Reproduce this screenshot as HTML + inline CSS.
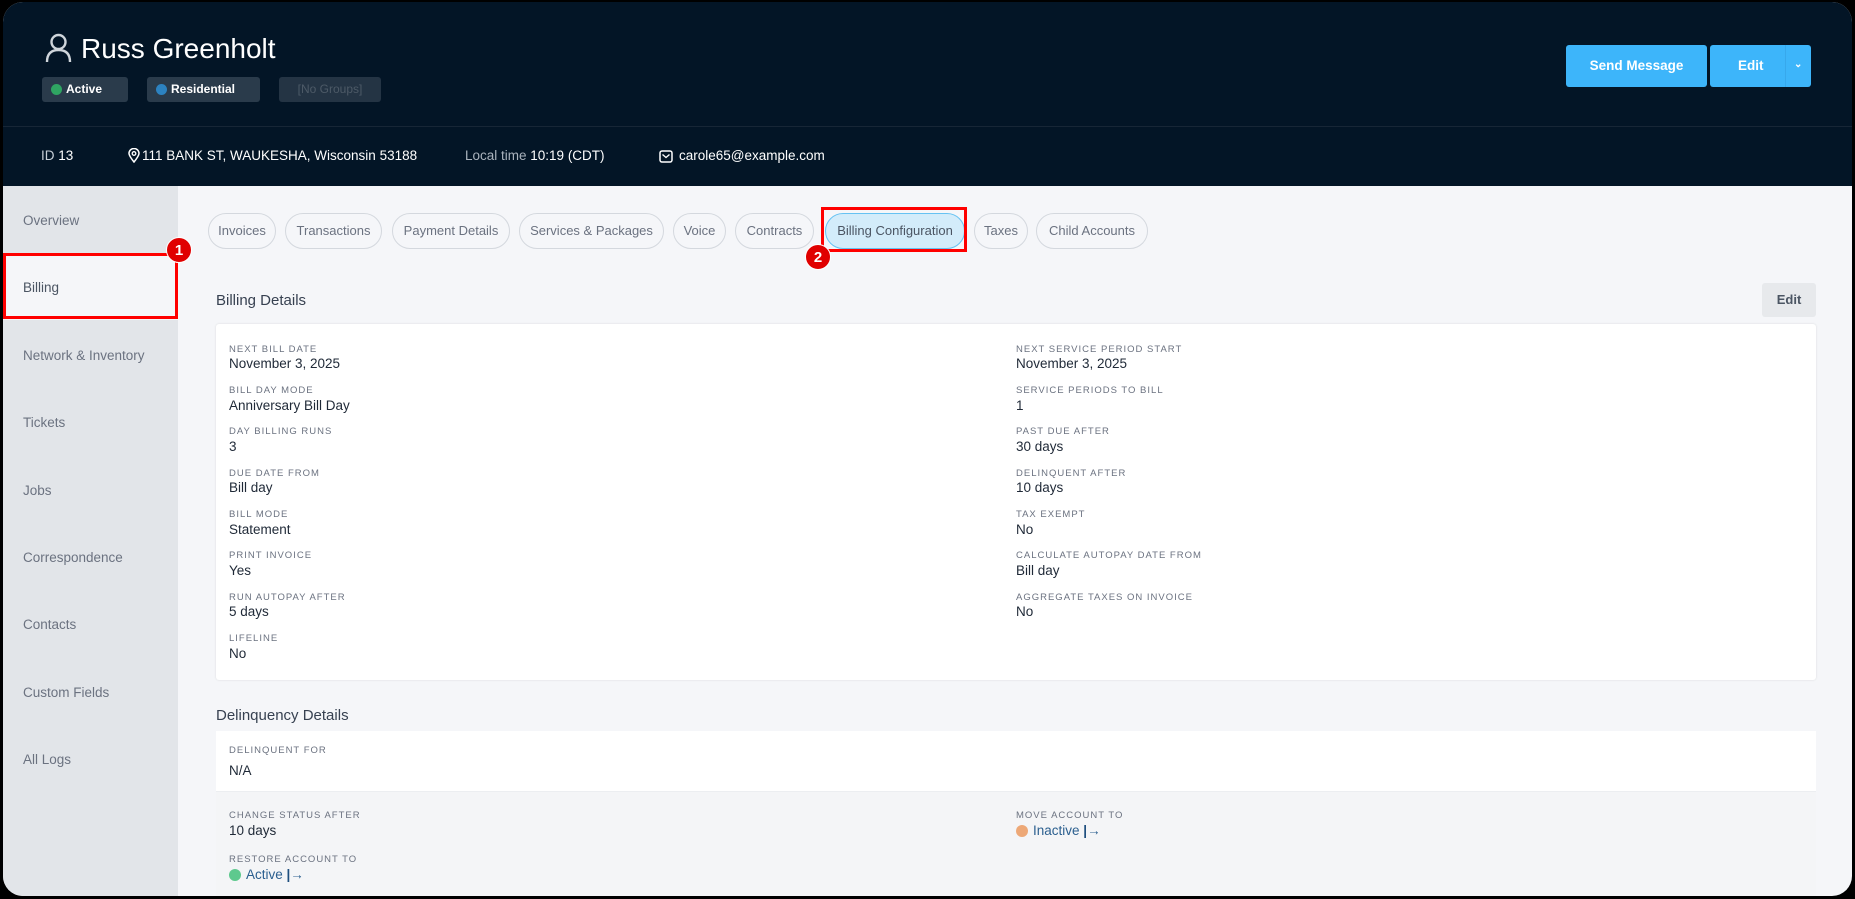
<!DOCTYPE html>
<html><head><meta charset="utf-8"><style>
*{margin:0;padding:0;box-sizing:border-box}
html,body{width:1855px;height:899px;background:#000;overflow:hidden;font-family:"Liberation Sans",sans-serif}
#f{position:absolute;left:3px;top:2px;width:1849px;height:894px;border-radius:20px;overflow:hidden;background:#f5f6f9}
.a{position:absolute;white-space:nowrap}
#hd{position:absolute;left:0;top:0;width:100%;height:184px;background:#031526}
#sep{position:absolute;left:0;top:124px;width:100%;height:1px;background:#172636}
.bd{position:absolute;top:75px;height:25px;border-radius:3px;background:#2a3b4b;color:#fff;font-size:12px;font-weight:bold;line-height:25px;padding-left:24px}
.bd i{position:absolute;left:9px;top:7px;width:11px;height:11px;border-radius:50%}
.info{position:absolute;top:146px;font-size:13.5px;color:#e6ebf0}
#sb{position:absolute;left:0;top:184px;width:175px;height:720px;background:#e2e5e9}
.si{position:absolute;left:20px;font-size:13.5px;color:#6b7280}
.tab{position:absolute;top:211px;height:36px;border:1px solid #d4d8de;border-radius:18px;font-size:13px;color:#6b7280;line-height:34px;text-align:center}
.lb{position:absolute;font-size:9.5px;letter-spacing:1px;color:#6b7280}
.vl{position:absolute;font-size:13.5px;color:#1f2937}
.num{position:absolute;width:26px;height:26px;border-radius:50%;background:#e00000;color:#fff;font-weight:bold;font-size:15px;text-align:center;line-height:26px;border:1px solid #fff}
</style></head><body><div id="f">
<div id="hd">
<svg class="a" style="left:42px;top:31px" width="27" height="30" viewBox="0 0 27 30"><circle cx="13.5" cy="9" r="7" fill="none" stroke="#cfd5db" stroke-width="2.4"/><path d="M2 29 Q2 17 13.5 17 Q25 17 25 29" fill="none" stroke="#cfd5db" stroke-width="2.4"/></svg>
<div class="a" style="left:78px;top:31px;font-size:28px;color:#fff">Russ Greenholt</div>
<div class="bd" style="left:39px;width:86px"><i style="background:#2fa562"></i>Active</div>
<div class="bd" style="left:144px;width:113px"><i style="background:#2c82c0"></i>Residential</div>
<div class="bd" style="left:276px;width:102px;padding-left:0;text-align:center;color:#4d5a67;font-weight:normal;background:#243444">[No Groups]</div>
<div class="a" style="left:1563px;top:43px;width:141px;height:42px;background:#3db5fa;border-radius:3px;color:#fff;font-size:13.5px;font-weight:bold;text-align:center;line-height:42px">Send Message</div>
<div class="a" style="left:1707px;top:43px;width:101px;height:42px;background:#3db5fa;border-radius:3px;color:#fff;font-size:13.5px;font-weight:bold;line-height:42px"><span style="position:absolute;left:28px">Edit</span><span style="position:absolute;left:75px;top:0;width:1px;height:42px;background:#37a8ec"></span><span style="position:absolute;left:84px;top:-1px;font-size:10px">&#8964;</span></div>
<div id="sep"></div>
<div class="info" style="left:38px;color:#c8d0d8">ID <span style="color:#fff">13</span></div>
<svg class="a" style="left:125px;top:146px" width="12" height="15" viewBox="0 0 12 15"><path d="M6 14 C2 9 1 7 1 5.5 A5 5 0 0 1 11 5.5 C11 7 10 9 6 14Z" fill="none" stroke="#fff" stroke-width="1.5"/><circle cx="6" cy="5.5" r="1.8" fill="none" stroke="#fff" stroke-width="1.3"/></svg>
<div class="info" style="left:139px;color:#fff">111 BANK ST, WAUKESHA, Wisconsin 53188</div>
<div class="info" style="left:462px;color:#aab3bd">Local time <span style="color:#fff">10:19 (CDT)</span></div>
<svg class="a" style="left:656px;top:148px" width="14" height="13" viewBox="0 0 14 13"><rect x="1" y="1" width="12" height="11" rx="2" fill="none" stroke="#fff" stroke-width="1.5"/><path d="M3.5 4.5 L7 7.5 L10.5 4.5" fill="none" stroke="#fff" stroke-width="1.4"/></svg>
<div class="info" style="left:676px;color:#fff">carole65@example.com</div>
</div>
<div id="sb">
<div class="si" style="top:27px">Overview</div>
<div class="a" style="left:0;top:68px;width:175px;height:66px;background:#f5f6f9"></div>
<div class="si" style="top:94px;color:#4b5563">Billing</div>
<div class="si" style="top:162px">Network &amp; Inventory</div>
<div class="si" style="top:229px">Tickets</div>
<div class="si" style="top:297px">Jobs</div>
<div class="si" style="top:364px">Correspondence</div>
<div class="si" style="top:431px">Contacts</div>
<div class="si" style="top:499px">Custom Fields</div>
<div class="si" style="top:566px">All Logs</div>
</div>
<div class="a" style="left:0;top:251px;width:175px;height:66px;border:3px solid #f00"></div>
<div class="num" style="left:163px;top:235px">1</div>

<div class="tab" style="left:205px;width:68px">Invoices</div>
<div class="tab" style="left:282px;width:97px">Transactions</div>
<div class="tab" style="left:389px;width:118px">Payment Details</div>
<div class="tab" style="left:516px;width:145px">Services &amp; Packages</div>
<div class="tab" style="left:670px;width:53px">Voice</div>
<div class="tab" style="left:732px;width:79px">Contracts</div>
<div class="tab" style="left:822px;width:140px;background:#d3ecfa;border-color:#66c2f2;color:#4b5563">Billing Configuration</div>
<div class="tab" style="left:971px;width:54px">Taxes</div>
<div class="tab" style="left:1033px;width:112px">Child Accounts</div>
<div class="a" style="left:818px;top:205px;width:146px;height:45px;border:3px solid #f00"></div>
<div class="num" style="left:802px;top:242px">2</div>

<div class="a" style="left:213px;top:290px;font-size:15px;color:#374151">Billing Details</div>
<div class="a" style="left:1759px;top:281px;width:54px;height:34px;background:#e7e9ec;border-radius:3px;font-size:13px;font-weight:bold;color:#4b5563;text-align:center;line-height:34px">Edit</div>
<div class="a" style="left:213px;top:322px;width:1600px;height:356px;background:#fff;border-radius:3px;box-shadow:0 0 2px rgba(0,0,0,.12)"></div>

<div class="lb" style="left:226px;top:342px">NEXT BILL DATE</div><div class="vl" style="left:226px;top:354px">November 3, 2025</div>
<div class="lb" style="left:226px;top:383px">BILL DAY MODE</div><div class="vl" style="left:226px;top:396px">Anniversary Bill Day</div>
<div class="lb" style="left:226px;top:424px">DAY BILLING RUNS</div><div class="vl" style="left:226px;top:437px">3</div>
<div class="lb" style="left:226px;top:466px">DUE DATE FROM</div><div class="vl" style="left:226px;top:478px">Bill day</div>
<div class="lb" style="left:226px;top:507px">BILL MODE</div><div class="vl" style="left:226px;top:520px">Statement</div>
<div class="lb" style="left:226px;top:548px">PRINT INVOICE</div><div class="vl" style="left:226px;top:561px">Yes</div>
<div class="lb" style="left:226px;top:590px">RUN AUTOPAY AFTER</div><div class="vl" style="left:226px;top:602px">5 days</div>
<div class="lb" style="left:226px;top:631px">LIFELINE</div><div class="vl" style="left:226px;top:644px">No</div>

<div class="lb" style="left:1013px;top:342px">NEXT SERVICE PERIOD START</div><div class="vl" style="left:1013px;top:354px">November 3, 2025</div>
<div class="lb" style="left:1013px;top:383px">SERVICE PERIODS TO BILL</div><div class="vl" style="left:1013px;top:396px">1</div>
<div class="lb" style="left:1013px;top:424px">PAST DUE AFTER</div><div class="vl" style="left:1013px;top:437px">30 days</div>
<div class="lb" style="left:1013px;top:466px">DELINQUENT AFTER</div><div class="vl" style="left:1013px;top:478px">10 days</div>
<div class="lb" style="left:1013px;top:507px">TAX EXEMPT</div><div class="vl" style="left:1013px;top:520px">No</div>
<div class="lb" style="left:1013px;top:548px">CALCULATE AUTOPAY DATE FROM</div><div class="vl" style="left:1013px;top:561px">Bill day</div>
<div class="lb" style="left:1013px;top:590px">AGGREGATE TAXES ON INVOICE</div><div class="vl" style="left:1013px;top:602px">No</div>

<div class="a" style="left:213px;top:705px;font-size:15px;color:#374151">Delinquency Details</div>
<div class="a" style="left:213px;top:729px;width:1600px;height:60px;background:#fff"></div>
<div class="a" style="left:213px;top:789px;width:1600px;height:110px;background:#f4f5f7;border-top:1px solid #eceef1"></div>
<div class="lb" style="left:226px;top:743px">DELINQUENT FOR</div><div class="vl" style="left:226px;top:761px">N/A</div>
<div class="lb" style="left:226px;top:808px">CHANGE STATUS AFTER</div><div class="vl" style="left:226px;top:821px">10 days</div>
<div class="lb" style="left:226px;top:852px">RESTORE ACCOUNT TO</div>
<div class="a" style="left:226px;top:867px;width:12px;height:12px;border-radius:50%;background:#5ec98e"></div>
<div class="a" style="left:243px;top:865px;font-size:13.5px;color:#2b5f8f">Active <b style="color:#1f4f7f">|</b>&#8594;</div>
<div class="lb" style="left:1013px;top:808px">MOVE ACCOUNT TO</div>
<div class="a" style="left:1013px;top:823px;width:12px;height:12px;border-radius:50%;background:#eda877"></div>
<div class="a" style="left:1030px;top:821px;font-size:13.5px;color:#2b5f8f">Inactive <b style="color:#1f4f7f">|</b>&#8594;</div>
</div></body></html>
